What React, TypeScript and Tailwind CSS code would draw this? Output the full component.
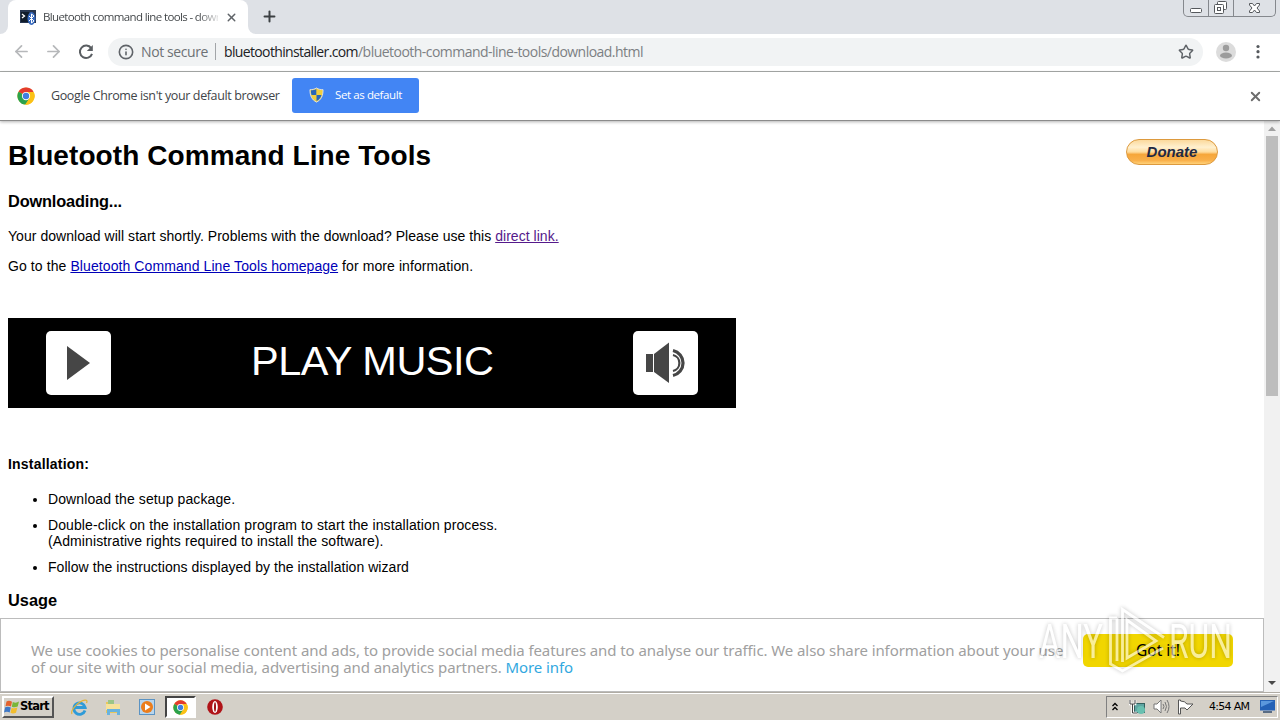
import React from 'react';
import { ArrowLeft, ArrowRight, Info, Star, X, Plus } from 'lucide-react';

function ChromeLogo({ size = 18 }: { size?: number }) {
  return (
    <svg width={size} height={size} viewBox="0 0 48 48" className="shrink-0">
      <circle cx="24" cy="24" r="23" fill="#fbc116" />
      <path d="M24 24 L4.1 12.5 A23 23 0 0 1 43.9 12.5 Z" fill="#e33b2e" />
      <path d="M24 24 L4.1 12.5 A23 23 0 0 0 22 46.9 L33.1 30.4 Z" fill="#2ba24c" />
      <path d="M24 13 H44.2 A23 23 0 0 1 22.5 47 L33.5 29.5 Z" fill="#fbc116" />
      <circle cx="24" cy="24" r="11" fill="#fff" />
      <circle cx="24" cy="24" r="8.5" fill="#3f7fe0" />
    </svg>
  );
}

function ShieldIcon() {
  return (
    <svg width="15" height="16" viewBox="0 0 16 16" className="shrink-0">
      <path d="M8 .5 C10 2 12.5 2.3 15 2.3 C15 9 13 13 8 15.6 C3 13 1 9 1 2.3 C3.500 2.3 6 2 8 .5Z" fill="#f2cf3d" stroke="#d9dfe6" />
      <path d="M7.800 1.500 C6 2.600 4 3 2 3 C2 5 2.200 6.500 2.700 8 H7.800Z M8 8 H13.300 C12.500 11 11 13 8 14.500Z" fill="#2866b8" />
    </svg>
  );
}

function TabStrip() {
  return (
    <div className="flex h-[34px] shrink-0 items-stretch bg-[#dee1e6]">
      <div className="flex w-[8px] bg-white"><div className="w-full rounded-br-lg bg-[#dee1e6]" /></div>
      <div className="flex w-[240px] items-center rounded-t-lg bg-white pl-[12px]">
        <svg width="16" height="15" viewBox="0 0 16 15" className="shrink-0">
          <rect width="16" height="13" fill="#27364f" />
          <rect x="1" y="2" width="8" height="10" fill="#101c2b" />
          <path d="M2 4 L4.500 6 L2 8" fill="none" stroke="#fff" strokeWidth="1.300" />
          <ellipse cx="11.500" cy="8.500" rx="4" ry="6.500" fill="#3568bd" />
          <path d="M9 6 L14 11 L11.500 13 V4 L14 6 L9 11" fill="none" stroke="#fff" />
        </svg>
        <div className="ml-[7px] w-[175px] whitespace-nowrap bg-linear-to-r from-[#3c4043] from-88% to-[#e4e4e4] bg-clip-text font-['Open_Sans',sans-serif] text-[11.500px] tracking-[-0.63px] text-transparent">
          Bluetooth command line tools - down
        </div>
        <X size={13} strokeWidth={2.700} className="ml-[7px] text-[#5f6368]" />
      </div>
      <div className="flex w-[8px] bg-white"><div className="w-full rounded-bl-lg bg-[#dee1e6]" /></div>
      <Plus size={17} strokeWidth={2.800} className="ml-[5px] mt-[8px] text-[#3c4043]" />
      <div className="ml-auto mr-[4px] flex h-[17px] w-[93px] rounded-b-[5px] border border-t-0 border-[#85888d]">
        <svg width="91" height="16" viewBox="0 0 91 16" fill="#fff" stroke="#55585c">
          <path d="M24.500 0V16M49.500 0V16" stroke="#85888d" />
          <rect x="6.500" y="8.500" width="11" height="4" rx="1" />
          <rect x="33.500" y="1.500" width="9" height="8" rx="1" />
          <rect x="30.500" y="4.500" width="9" height="9" rx="1" />
          <rect x="33.500" y="7.500" width="3" height="3" />
          <path d="M65.500 3.500h3l2 2.500 2-2.500h3v1.500l-2.500 3 2.500 3v1.500h-3l-2-2.500-2 2.500h-3v-1.500l2.500-3-2.500-3z" />
        </svg>
      </div>
    </div>
  );
}

function Toolbar() {
  return (
    <div className="flex h-[38px] shrink-0 items-center border-b border-[#a9acaa] bg-white pb-[2px] font-['Open_Sans',sans-serif]">
      <ArrowLeft size={19} strokeWidth={2.200} className="ml-[12px] text-[#b6b8ba]" />
      <ArrowRight size={19} strokeWidth={2.200} className="ml-[13px] text-[#b6b8ba]" />
      <svg width="16" height="16" viewBox="0 0 16 16" className="ml-[15px]" fill="none" stroke="#5a5e62" strokeWidth="2">
        <path d="M13.200 4.200A6.200 6.200 0 1 0 14 9.800" />
        <path d="M14.800 1v6h-6z" fill="#5a5e62" stroke="none" />
      </svg>
      <div className="ml-[14px] flex h-[28px] w-[1095px] items-center rounded-full bg-[#f1f3f4] pl-[10px] pr-[9px] text-[14px] whitespace-nowrap">
        <Info size={16} strokeWidth={2.400} className="text-[#5f6368]" />
        <span className="ml-[7px] w-[67px] tracking-[-0.4px] text-[#6d7175]">Not secure</span>
        <span className="ml-[7px] h-[17px] w-px bg-[#a2a5a8]" />
        <span className="ml-[8px] w-[134px] tracking-[-0.64px] text-[#202124]">bluetoothinstaller.com</span>
        <span className="tracking-[-0.53px] text-[#7c8083]">/bluetooth-command-line-tools/download.html</span>
        <Star size={16} strokeWidth={2.200} className="ml-auto text-[#5f6368]" />
      </div>
      <svg width="20" height="20" viewBox="0 0 20 20" className="ml-[13px]">
        <circle cx="10" cy="10" r="10" fill="#dcdcdc" />
        <circle cx="10" cy="6" r="3.200" fill="#9c9c9c" />
        <ellipse cx="10" cy="13.500" rx="6" ry="3" fill="#9c9c9c" />
      </svg>
      <svg width="4" height="16" viewBox="0 0 4 16" className="ml-[20px]" fill="#55595d">
        <circle cx="2" cy="2.500" r="1.600" /><circle cx="2" cy="7.700" r="1.600" /><circle cx="2" cy="13" r="1.600" />
      </svg>
    </div>
  );
}

function InfoBar() {
  return (
    <div className="relative z-10 flex h-[49px] shrink-0 items-center border-b border-[#8b8b8b] bg-white pl-[17px] font-['Open_Sans',sans-serif] shadow-[0_1px_3px_rgba(0,0,0,0.3)]">
      <ChromeLogo />
      <span className="ml-[16px] w-[229px] whitespace-nowrap text-[12.500px] tracking-[-0.38px] text-[#414448]">Google Chrome isn't your default browser</span>
      <button className="mb-[2px] ml-[12px] flex h-[35px] w-[127px] items-center rounded-[3px] bg-[#4285f4] pl-[17px] text-[11.500px] tracking-[-0.4px] text-white">
        <ShieldIcon />
        <span className="ml-[11px]">Set as default</span>
      </button>
      <X size={15} strokeWidth={3} className="ml-auto mr-[17px] text-[#6d6d6d]" />
    </div>
  );
}

function MusicBanner() {
  return (
    <div className="mt-[44px] flex h-[90px] w-[728px] items-center bg-black">
      <div className="ml-[38px] flex h-[64px] w-[65px] items-center rounded-[5px] bg-white pl-[21px]">
        <svg width="23" height="34" viewBox="0 0 23 34" fill="#464646"><path d="M0 0L23 17L0 34Z" /></svg>
      </div>
      <div className="mb-[4px] ml-[140px] w-[244px] whitespace-nowrap text-[41.500px] leading-[50px] tracking-[-0.5px] text-white">PLAY MUSIC</div>
      <div className="ml-[138px] flex h-[64px] w-[65px] items-center rounded-[5px] bg-white pl-[13px]">
        <svg width="40" height="42" viewBox="0 0 40 42" fill="#464646">
          <rect y="12" width="7" height="18" />
          <path d="M8 12L23 .5V41L8 30Z" />
          <path d="M27 13A8.200 8.200 0 0 1 27 29" fill="none" stroke="#464646" strokeWidth="2.200" />
          <path d="M27 8.500A12.800 12.800 0 0 1 27 33.500" fill="none" stroke="#464646" strokeWidth="3.200" />
        </svg>
      </div>
    </div>
  );
}

function PageContent() {
  return (
    <div className="flex-1 pl-[8px] text-[14px] leading-[16px] text-black">
      <div className="flex h-[66px] items-start">
        <h1 className="mt-[19px] w-[423px] whitespace-nowrap text-[28px] font-bold leading-[32px] tracking-[0.08px]">Bluetooth Command Line Tools</h1>
        <button className="ml-auto mr-[46px] mt-[18px] h-[26px] w-[92px] rounded-full border border-[#dd9a3e] bg-[linear-gradient(#fbd99c,#fff0cf_30%,#ffdc9c_50%,#f6a63a_60%,#f9b04a_85%,#ffd27a)] text-[15px] font-bold italic leading-[24px] text-[#1f2a44]">
          Donate
        </button>
      </div>
      <h3 className="mt-[5px] text-[16.380px] font-bold leading-[18px] tracking-[-0.17px]">Downloading...</h3>
      <p className="mt-[18px] tracking-[0.04px]">Your download will start shortly. Problems with the download? Please use this <a className="text-[#551a8b] underline">direct link.</a></p>
      <p className="mt-[14px] tracking-[0.09px]">Go to the <a className="text-[#0000b8] underline">Bluetooth Command Line Tools homepage</a> for more information.</p>
      <MusicBanner />
      <h4 className="mt-[48px] font-bold tracking-[0.2px]">Installation:</h4>
      <ul className="mt-[19px] flex list-disc flex-col gap-[10px] pl-[40px] tracking-[0.1px]">
        <li>Download the setup package.</li>
        <li>Double-click on the installation program to start the installation process.<br />(Administrative rights required to install the software).</li>
        <li className="tracking-[0.05px]">Follow the instructions displayed by the installation wizard</li>
      </ul>
      <h3 className="mt-[16px] text-[16.380px] font-bold leading-[18px]">Usage</h3>
    </div>
  );
}

function Scrollbar() {
  return (
    <div className="flex w-[16px] shrink-0 flex-col items-center bg-[#f1f1f1]">
      <svg width="16" height="15" viewBox="0 0 16 15"><path d="M4 10L8 5.500L12 10Z" fill="#a0a0a0" /></svg>
      <div className="h-[260px] w-[12px] bg-[#bdbdbd]" />
      <svg width="16" height="16" viewBox="0 0 16 16" className="mt-auto"><path d="M4 5H12L8 9Z" fill="#4a4a4a" /></svg>
    </div>
  );
}

function CookieBar() {
  return (
    <div className="absolute bottom-0 left-0 flex h-[74px] w-[1264px] items-center border border-[#bcbcbc] bg-white font-['Noto_Sans',sans-serif]">
      <p className="ml-[30px] mt-[7px] w-[1040px] whitespace-nowrap text-[15px] leading-[17px] tracking-[-0.085px] text-[#a0a0a0]">
        We use cookies to personalise content and ads, to provide social media features and to analyse our traffic. We also share information about your use<br />
        of our site with our social media, advertising and analytics partners. <a className="text-[#31a8e0]">More info</a>
      </p>
      <button className="ml-[12px] mt-[-9px] h-[33px] w-[150px] rounded-[5px] bg-[#f1d600] text-[15.500px] text-black">Got it!</button>
    </div>
  );
}

function Watermark() {
  return (
    <svg width="210" height="80" viewBox="0 0 210 80" className="absolute left-[1030px] top-[602px] z-20 overflow-visible opacity-60 drop-shadow-[0_0_2px_rgba(0,0,0,0.4)]">
      <g fill="#fff" fontFamily="Roboto" fontWeight="400" fontSize="49">
        <text x="9" y="56" textLength="64" lengthAdjust="spacingAndGlyphs">ANY</text>
        <text x="139" y="56" textLength="63" lengthAdjust="spacingAndGlyphs">RUN</text>
      </g>
      <g fill="none" stroke="#fff" strokeWidth="2.800">
        <path d="M87 16H80.500V62L92.500 69L133 46" />
        <path d="M87 16V59" />
        <path d="M92.500 60V7.500L134 35.500" />
        <path d="M97 18V56L126 39Z" />
      </g>
    </svg>
  );
}

function Taskbar() {
  return (
    <div className="flex h-[28px] shrink-0 items-center border-t border-[#b0aca4] bg-[#d4d0c8] pt-px font-['DejaVu_Sans',sans-serif] text-[11px] text-black shadow-[inset_0_1px_0_#fff]">
      <button className="ml-[2px] flex h-[22px] w-[52px] items-center border-2 border-t-white border-l-white border-r-[#555] border-b-[#555] text-[11.500px] font-bold tracking-[-0.8px]">
        <svg width="16" height="16" viewBox="0 0 16 16" className="shrink-0">
          <path d="M2.500 2.500Q5 1 8 2.700L7 7.500Q4 6 1.500 7.300Z" fill="#e4622d" />
          <path d="M8.800 3Q12 4.500 15 2.500L13.700 7.500Q10.500 9 7.800 7.700Z" fill="#79b637" />
          <path d="M1.200 8.200Q4 7 6.800 8.500L5.700 13.500Q3 12 0 13.500Z" fill="#3e78c7" />
          <path d="M7.600 8.800Q10 10 13.400 8.500L12 13.700Q9 15 6.500 13.800Z" fill="#f2bd2e" />
        </svg>
        Start
      </button>
      <svg width="17" height="17" viewBox="0 0 17 17" className="ml-[17px]" fill="none">
        <path d="M14 11.500A5.700 5.700 0 1 1 14.200 8.500H4" stroke="#2f9bd8" strokeWidth="2.800" />
        <path d="M1 15C-1 11 8 2 14 1.200Q17 1 15.500 4" stroke="#e2b43b" strokeWidth="1.200" />
      </svg>
      <svg width="17" height="17" viewBox="0 0 17 17" className="ml-[17px]">
        <path d="M1 3H6L7 5H15V14H1Z" fill="#e9c75c" />
        <path d="M3 1H9V5H3Z" fill="#9bc586" />
        <path d="M1 5H15V11H1Z" fill="#f6e29a" />
        <path d="M2 16V10H15V16H12V13H5V16Z" fill="#69b3df" />
      </svg>
      <svg width="17" height="17" viewBox="0 0 17 17" className="ml-[17px]">
        <rect x=".5" y=".5" width="15" height="15" fill="#b8d5ec" stroke="#5b93c3" />
        <circle cx="8" cy="8" r="6" fill="#ec7d1b" />
        <path d="M6 4.500L11.500 8L6 11.500Z" fill="#fff" />
      </svg>
      <div className="ml-[9px] flex h-[22px] w-[31px] items-center justify-center border-2 border-t-[#444] border-l-[#444] border-r-white border-b-white bg-white">
        <ChromeLogo size={15} />
      </div>
      <svg width="16" height="16" viewBox="0 0 16 16" className="ml-[11px]">
        <circle cx="8" cy="8" r="7.800" fill="#b01318" />
        <ellipse cx="8" cy="8" rx="2.800" ry="6" fill="#fff" />
        <ellipse cx="8" cy="8" rx="1" ry="4.800" fill="#a01015" />
      </svg>
      <div className="ml-auto mr-[2px] flex h-[22px] w-[172px] items-center border border-t-[#808080] border-l-[#808080] border-r-white border-b-white">
        <svg width="8" height="10" viewBox="0 0 8 10" className="ml-[4px]" fill="none" stroke="#000" strokeWidth="1.300"><path d="M1.500 4L4 1.500L6.500 4M1.500 8L4 5.500L6.500 8" /></svg>
        <svg width="17" height="16" viewBox="0 0 17 16" className="ml-[10px]">
          <rect x="5.500" y="4.500" width="10" height="9" fill="#5ea5a2" stroke="#35615f" />
          <circle cx="12" cy="11" r="4" fill="#69c0b0" />
          <path d="M1 1V5H6V1M3.500 5V14H8" fill="none" stroke="#fff" strokeWidth="2.600" />
          <path d="M1 1V5H6V1M3.500 5V14H8" fill="none" stroke="#444" />
        </svg>
        <svg width="17" height="16" viewBox="0 0 17 16" className="ml-[7px]" fill="none" stroke="#777">
          <path d="M1 5H4L8 1V14L4 10H1Z" fill="#fff" />
          <path d="M10 5Q12 7.500 10 10M12 3Q15 7.500 12 12M14 1Q18 7.500 14 14" />
        </svg>
        <svg width="17" height="16" viewBox="0 0 17 16" className="ml-[7px]">
          <path d="M1.500 1V15H3.500V9H8L10 11Q13 8 16 5H10Q8 2 3.500 2V1Z" fill="#fff" stroke="#555" />
        </svg>
        <span className="ml-[15px] w-[41px] whitespace-nowrap tracking-[-0.7px]">4:54 AM</span>
        <svg width="15" height="14" viewBox="0 0 15 14" className="ml-[10px]">
          <rect width="15" height="10.500" fill="#2461b6" />
          <path d="M1 1H14L1 7Z" fill="#5b97dc" />
          <path d="M3 12H12" stroke="#596c84" strokeWidth="2" />
        </svg>
      </div>
    </div>
  );
}

export default function App() {
  return (
    <div className="relative flex h-[720px] w-[1280px] flex-col overflow-hidden bg-white font-['Liberation_Sans',Arial,sans-serif]">
      <TabStrip />
      <Toolbar />
      <InfoBar />
      <div className="relative flex min-h-0 flex-1">
        <PageContent />
        <Scrollbar />
        <CookieBar />
      </div>
      <Taskbar />
      <Watermark />
    </div>
  );
}
